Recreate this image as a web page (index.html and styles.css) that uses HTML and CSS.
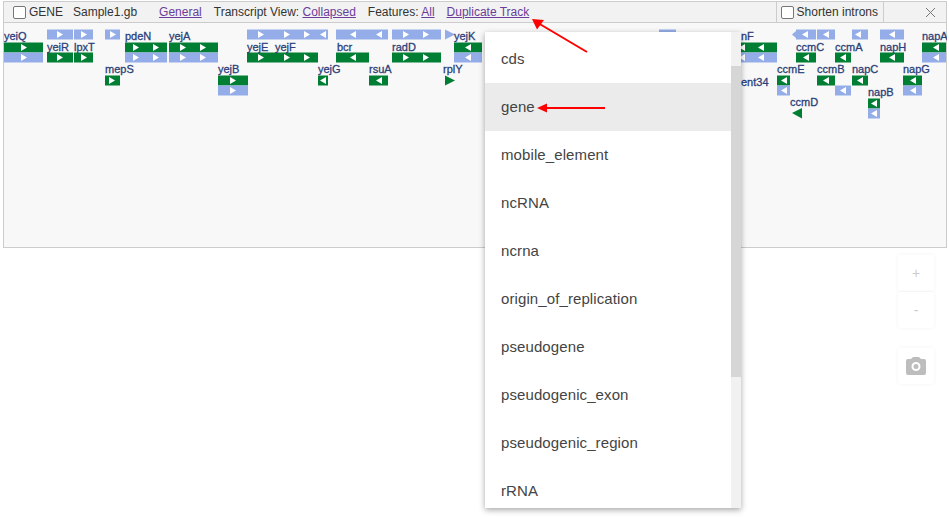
FILE: index.html
```html
<!DOCTYPE html>
<html lang="en">
<head>
    <meta charset="UTF-8">
    <title>Track</title>
    <link rel="stylesheet" href="styles.css">
</head>
<body>
    <div class="track">
        <div class="trackHeader">
            <label class="trackName"><span class="check"></span>GENE</label>
            <span class="fileName">Sample1.gb</span>
            <a class="general" href="#">General</a>
            <span class="item">Transcript View: <a href="#">Collapsed</a></span>
            <span class="item">Features: <a href="#">All</a></span>
            <a class="item" href="#">Duplicate Track</a>
            <label class="shorten"><span class="check"></span>Shorten introns</label>
            <button class="closeBtn">
                <svg width="11" height="11" viewBox="0 0 11 11"><path d="M1 1l9 9M10 1l-9 9" stroke="#777" fill="none"/></svg>
            </button>
        </div>
        <svg class="features" width="943" height="224" viewBox="4 23 943 224">
            <defs>
                <path id="r" d="M-3 -3.500L3 0L-3 3.500Z" fill="#fff"/>
                <path id="l" d="M3 -3.500L-3 0L3 3.500Z" fill="#fff"/>
            </defs>
            <!-- lane 1 -->
            <g class="lt">
                <rect x="47" y="29.500" width="26" height="10"/><rect x="74" y="29.500" width="19" height="10"/>
                <rect x="105" y="29.500" width="15" height="10"/><rect x="247" y="29.500" width="81" height="10"/>
                <rect x="336" y="29.500" width="52" height="10"/><rect x="392" y="29.500" width="49" height="10"/>
                <path d="M445 29.500L455 34.500L445 39.500Z"/><rect x="659" y="29.500" width="17" height="10"/>
                <path d="M792 34.500L796 31V38Z"/><rect x="796" y="29.500" width="20" height="10"/><rect x="817" y="29.500" width="18" height="10"/>
                <rect x="852" y="29.500" width="16" height="10"/><rect x="880" y="29.500" width="24" height="10"/>
            </g>
            <use href="#r" x="60" y="34.500"/><use href="#r" x="84" y="34.500"/><use href="#r" x="113" y="34.500"/>
            <use href="#r" x="261" y="34.500"/><use href="#r" x="287" y="34.500"/><use href="#r" x="307" y="34.500"/><use href="#l" x="323" y="34.500"/>
            <use href="#l" x="353" y="34.500"/><use href="#l" x="379" y="34.500"/><use href="#r" x="406" y="34.500"/><use href="#r" x="426" y="34.500"/>
            <use href="#l" x="805" y="34.500"/><use href="#l" x="826" y="34.500"/><use href="#l" x="858" y="34.500"/><use href="#l" x="892" y="34.500"/>

            <!-- lane 2 -->
            <g class="gr">
                <rect x="4" y="42.500" width="39" height="10"/><rect x="125" y="42.500" width="42" height="10"/><rect x="169" y="42.500" width="49" height="10"/>
                <rect x="454" y="42.500" width="28" height="10"/><rect x="741" y="42.500" width="36" height="10"/><rect x="922" y="42.500" width="24" height="10"/>
                <rect x="47" y="52.500" width="26" height="10"/><rect x="74" y="52.500" width="19" height="10"/><rect x="247" y="52.500" width="71" height="10"/>
                <rect x="336" y="52.500" width="33" height="10"/><rect x="392" y="52.500" width="49" height="10"/>
                <rect x="796" y="52.500" width="20" height="10"/><rect x="835" y="52.500" width="16" height="10"/><rect x="880" y="52.500" width="24" height="10"/>
            </g>
            <g class="lt">
                <rect x="4" y="52.500" width="39" height="10"/><rect x="125" y="52.500" width="42" height="10"/><rect x="169" y="52.500" width="49" height="10"/>
                <rect x="454" y="52.500" width="28" height="10"/><rect x="741" y="52.500" width="36" height="10"/><rect x="922" y="52.500" width="24" height="10"/>
            </g>
            <use href="#r" x="24" y="47.500"/><use href="#r" x="136" y="47.500"/><use href="#r" x="156" y="47.500"/><use href="#r" x="183" y="47.500"/><use href="#r" x="203" y="47.500"/>
            <use href="#l" x="468" y="47.500"/><use href="#l" x="742" y="47.500"/><use href="#l" x="761" y="47.500"/><use href="#l" x="936" y="47.500"/>
            <use href="#r" x="24" y="57.500"/><use href="#r" x="136" y="57.500"/><use href="#r" x="156" y="57.500"/><use href="#r" x="183" y="57.500"/><use href="#r" x="203" y="57.500"/>
            <use href="#l" x="468" y="57.500"/><use href="#l" x="742" y="57.500"/><use href="#l" x="761" y="57.500"/><use href="#l" x="936" y="57.500"/>
            <use href="#r" x="60" y="57.500"/><use href="#r" x="84" y="57.500"/><use href="#r" x="261" y="57.500"/><use href="#r" x="287" y="57.500"/><use href="#r" x="307" y="57.500"/>
            <use href="#l" x="353" y="57.500"/><use href="#r" x="406" y="57.500"/><use href="#r" x="426" y="57.500"/>
            <use href="#l" x="806" y="57.500"/><use href="#l" x="843" y="57.500"/><use href="#l" x="892" y="57.500"/>

            <!-- lane 3 -->
            <g class="gr">
                <rect x="105" y="75.500" width="15" height="10"/><rect x="218" y="75.500" width="30" height="10"/><rect x="318" y="75.500" width="10" height="10"/>
                <rect x="369" y="75.500" width="19" height="10"/><path d="M445 75.500L455 80.500L445 85.500Z"/>
                <rect x="777" y="75.500" width="13" height="10"/><rect x="817" y="75.500" width="18" height="10"/><rect x="852" y="75.500" width="16" height="10"/><rect x="903" y="75.500" width="19" height="10"/>
            </g>
            <g class="lt">
                <rect x="218" y="85.500" width="30" height="10"/><rect x="777" y="85.500" width="13" height="10"/><rect x="835" y="85.500" width="16" height="10"/><rect x="903" y="85.500" width="19" height="10"/>
            </g>
            <use href="#r" x="112" y="80.500"/><use href="#r" x="233" y="80.500"/><use href="#l" x="323" y="80.500"/><use href="#l" x="379" y="80.500"/>
            <use href="#l" x="784" y="80.500"/><use href="#l" x="826" y="80.500"/><use href="#l" x="860" y="80.500"/><use href="#l" x="913" y="80.500"/>
            <use href="#r" x="233" y="90.500"/><use href="#l" x="784" y="90.500"/><use href="#l" x="843" y="90.500"/><use href="#l" x="913" y="90.500"/>

            <!-- lane 4 -->
            <g class="gr">
                <rect x="868" y="98.500" width="12" height="10"/><path d="M792 113L802 108V118.500Z"/>
            </g>
            <rect class="ltr" x="868" y="108.500" width="12" height="10"/>
            <use href="#l" x="874" y="103.500"/><use href="#l" x="874" y="113.500"/>

            <g class="names">
                <text x="4" y="40">yeiQ</text><text x="47" y="51">yeiR</text><text x="74" y="51">lpxT</text><text x="105" y="73">mepS</text>
                <text x="125" y="40">pdeN</text><text x="169" y="40">yejA</text><text x="218" y="73">yejB</text><text x="247" y="51">yejE</text><text x="275" y="51">yejF</text>
                <text x="318" y="73">yejG</text><text x="337" y="51">bcr</text><text x="369" y="73">rsuA</text><text x="392" y="51">radD</text><text x="443" y="73">rplY</text>
                <text x="454" y="40">yejK</text><text x="741" y="40">nF</text><text x="741" y="86">ent34</text><text x="796" y="51">ccmC</text><text x="835" y="51">ccmA</text>
                <text x="880" y="51">napH</text><text x="922" y="40">napA</text><text x="777" y="73">ccmE</text><text x="817" y="73">ccmB</text><text x="852" y="73">napC</text>
                <text x="903" y="73">napG</text><text x="868" y="96">napB</text><text x="790" y="106">ccmD</text>
            </g>
        </svg>
    </div>

    <div class="zoomBtns">
        <button class="fab">+</button>
        <button class="fab">-</button>
        <button class="fab camera">
            <svg width="20" height="18" viewBox="0 0 20 18"><path fill="#bdbdbd" fill-rule="evenodd" d="M7 0h6l2 2h3a2 2 0 0 1 2 2v12a2 2 0 0 1-2 2H2a2 2 0 0 1-2-2V4a2 2 0 0 1 2-2h3zM10 5a4.500 4.500 0 1 0 0 9a4.500 4.500 0 0 0 0-9zM10 7a2.500 2.500 0 1 1 0 5a2.500 2.500 0 0 1 0-5z"/></svg>
        </button>
    </div>

    <div class="menu">
        <ul class="menuList">
            <li>cds</li>
            <li class="selected">gene</li>
            <li>mobile_element</li>
            <li>ncRNA</li>
            <li>ncrna</li>
            <li>origin_of_replication</li>
            <li>pseudogene</li>
            <li>pseudogenic_exon</li>
            <li>pseudogenic_region</li>
            <li>rRNA</li>
        </ul>
        <div class="scrollBar"><div class="scrollThumb"></div></div>
    </div>

    <svg class="callouts" width="949" height="517">
        <path d="M587 52L538 23" stroke="#f00" stroke-width="2" fill="none"/>
        <path d="M532 19L544 20L537 29.500Z" fill="#f00"/>
        <path d="M605 108H545" stroke="#f00" stroke-width="2" fill="none"/>
        <path d="M537 108L547 103.500V112.500Z" fill="#f00"/>
    </svg>
</body>
</html>
```

FILE: styles.css
```css
html, body {
    height: 100%;
}
body {
    margin: 0;
    background-color: #fff;
    color: #333;
    font-family: "Liberation Sans", Arial, sans-serif;
    font-size: 12px;
    overflow: hidden;
    position: relative;
}
a {
    color: #6a3d9a;
}
.track {
    margin: 1px 2px 0 3px;
    height: 245px;
    border: 1px solid #ccc;
    background-color: #f8f8f8;
}
.trackHeader {
    display: flex;
    align-items: center;
    height: 20px;
    background-color: #f2f2f2;
    border-bottom: 1px solid #ccc;
    white-space: nowrap;
}
.check {
    width: 11px;
    height: 11px;
    border: 1px solid #767676;
    border-radius: 2px;
    background-color: #fff;
    margin-right: 3px;
}
.trackName {
    display: flex;
    align-items: center;
    margin-left: 9px;
}
.fileName {
    margin-left: 10px;
}
.general {
    margin-left: 22px;
}
.item {
    margin-left: 12px;
}
.shorten {
    display: flex;
    align-items: center;
    height: 100%;
    margin-left: auto;
    padding: 0 5px 0 4px;
    border-left: 1px solid #ccc;
    border-right: 1px solid #ccc;
}
.closeBtn {
    width: 62px;
    height: 100%;
    padding: 0 10px 0 0;
    border: none;
    background: none;
    display: flex;
    align-items: center;
    justify-content: flex-end;
}
.features {
    display: block;
}
.lt, .ltr {
    fill: #94ade8;
}
.gr {
    fill: #007e33;
}
.names {
    fill: #2b3f78;
    font-size: 11px;
    stroke: #2b3f78;
    stroke-width: 0.3;
}
.zoomBtns {
    position: absolute;
    top: 255px;
    left: 898px;
    display: flex;
    flex-direction: column;
    gap: 1px;
}
.fab {
    width: 36px;
    height: 36px;
    padding: 0;
    border: none;
    border-radius: 3px;
    background-color: #fff;
    color: #ccc;
    font-family: "Liberation Sans", Arial, sans-serif;
    font-size: 14px;
    box-shadow: 0 0 4px rgba(0, 0, 0, 0.05);
    display: flex;
    align-items: center;
    justify-content: center;
}
.camera {
    margin-top: 19px;
}
.menu {
    position: absolute;
    top: 32px;
    left: 485px;
    width: 256px;
    height: 476px;
    background-color: #fff;
    overflow: hidden;
    display: flex;
    box-shadow: 0 2px 6px rgba(0, 0, 0, 0.35);
}
.menuList {
    flex: 1;
    margin: 0;
    padding: 3px 0 0;
    list-style: none;
    font-size: 15px;
    letter-spacing: 0.1px;
    color: #444;
}
.menuList li {
    height: 48px;
    line-height: 48px;
    padding-left: 16px;
}
.selected {
    background-color: #ebebeb;
}
.scrollBar {
    width: 10px;
    background-color: #f1f1f1;
    padding-top: 34px;
}
.scrollThumb {
    height: 311px;
    background-color: #d6d6d6;
}
.callouts {
    position: absolute;
    top: 0;
    left: 0;
    pointer-events: none;
}
```
